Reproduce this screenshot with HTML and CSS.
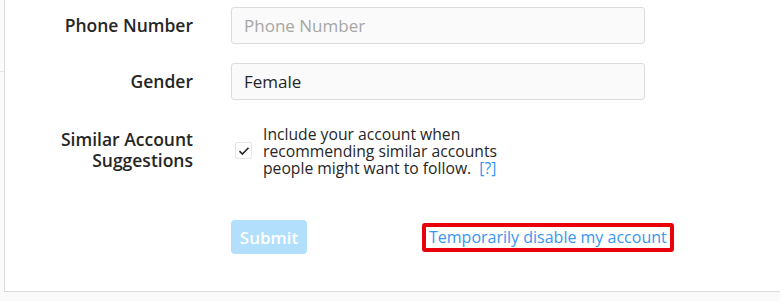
FILE: index.html
```html
<!DOCTYPE html>
<html lang="en">
<head>
    <meta charset="UTF-8">
    <title>Edit Profile</title>
    <link rel="stylesheet" href="styles.css">
</head>
<body>

    <div class="page">
        <div class="tab-edge"></div>
        <div class="panel">
            <form class="form">
                <label class="label" for="phone">Phone Number</label>
                <input class="field" id="phone" type="text" placeholder="Phone Number">

                <label class="label" for="gender">Gender</label>
                <input class="field" id="gender" type="text" value="Female">

                <label class="label label-wide">Similar Account Suggestions</label>
                <div class="check-row">
                    <span class="checkbox">
                        <svg width="12" height="10" viewBox="0 0 12 10"><path d="M1.5 5.2 L4.4 8 L10.5 1.8" fill="none" stroke="#262626" stroke-width="1.6"/></svg>
                    </span>
                    <p class="check-text">Include your account when recommending similar accounts people might want to follow.&nbsp; <a href="#" class="help">[?]</a></p>
                </div>

                <div class="actions">
                    <button type="button" class="submit" disabled>Submit</button>
                    <a href="#" class="disable-link">Temporarily disable my account</a>
                </div>
            </form>
        </div>
    </div>

</body>
</html>
```

FILE: styles.css
```css
body {
    margin: 0;
    background: #fafafa;
    font-family: "Open Sans", "Liberation Sans", sans-serif;
    color: #262626;
}

.page {
    display: flex;
    height: 292px;
}

.tab-edge {
    width: 4px;
    height: 71px;
    border-bottom: 1px solid #e6e6e6;
}

.panel {
    flex: 1;
    background: white;
    border-left: 1px solid #dbdbdb;
    border-bottom: 1px solid #dbdbdb;
}

.form {
    display: grid;
    grid-template-columns: 188px 414px;
    column-gap: 38px;
    padding-top: 7px;
}

.label {
    text-align: right;
    font-size: 17.5px;
    font-weight: 600;
    line-height: 37px;
    margin-bottom: 19px;
}

.label-wide {
    line-height: 21px;
    padding-top: 10px;
    margin-bottom: 0;
}

.field {
    box-sizing: border-box;
    height: 37px;
    margin: 0 0 19px 0;
    padding: 0 12px;
    border: 1px solid #dbdbdb;
    border-radius: 3px;
    background: #fafafa;
    font-family: inherit;
    font-size: 17px;
    color: #262626;
}

.field::placeholder {
    color: #a6a6a6;
}

.check-row {
    display: flex;
    align-items: flex-start;
    padding-top: 7px;
}

.checkbox {
    box-sizing: border-box;
    flex: none;
    width: 17px;
    height: 17px;
    margin: 16px 11px 0 4px;
    border: 1px solid #e6e6e6;
    border-radius: 2px;
    display: flex;
    align-items: center;
    justify-content: center;
}

.check-text {
    margin: 0;
    width: 240px;
    font-size: 15.7px;
    line-height: 17px;
}

.help {
    color: #3897f0;
    text-decoration: none;
}

.actions {
    grid-column: 2;
    display: flex;
    align-items: center;
    margin-top: 43px;
}

.submit {
    flex: none;
    width: 76px;
    height: 34px;
    border: none;
    border-radius: 4px;
    background: #b2dffc;
    color: white;
    font-family: inherit;
    font-size: 17px;
    font-weight: 600;
}

.disable-link {
    flex: none;
    margin-left: 115px;
    padding: 0 3px;
    border: 4px solid #e8000b;
    border-radius: 3px;
    color: #3897f0;
    font-size: 16px;
    line-height: 21px;
    white-space: nowrap;
    text-decoration: none;
}
```
